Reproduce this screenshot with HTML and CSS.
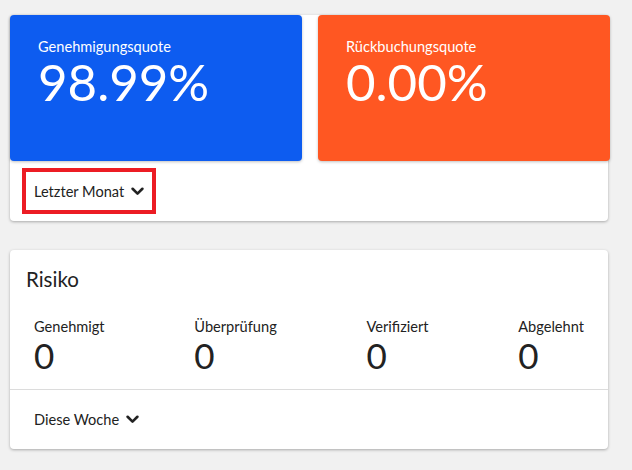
FILE: index.html
```html
<!DOCTYPE html>
<html lang="de">
<head>
  <meta charset="UTF-8" />
  <meta name="viewport" content="width=device-width, initial-scale=1.0"/>
  <title>Dashboard</title>
  <link rel="stylesheet" href="styles.css">
</head>
<body>
  <div class="page">
    <section class="card">
      <div class="tiles">
        <div class="tile tile-blue">
          <div class="tile-label">Genehmigungsquote</div>
          <div class="tile-value">98.99%</div>
        </div>
        <div class="tile tile-orange">
          <div class="tile-label">Rückbuchungsquote</div>
          <div class="tile-value">0.00%</div>
        </div>
      </div>
      <div class="card-footer">
        <button class="period period-focus">Letzter Monat
          <svg class="chevron" viewBox="0 0 12 8" width="13" height="9"><path d="M1.5 1.5 6 6l4.5-4.5" fill="none" stroke="currentColor" stroke-width="2.4" stroke-linecap="round" stroke-linejoin="round"/></svg>
        </button>
      </div>
    </section>

    <section class="card">
      <h2 class="card-title">Risiko</h2>
      <div class="stats">
        <div class="stat"><div class="stat-label">Genehmigt</div><div class="stat-value">0</div></div>
        <div class="stat"><div class="stat-label">Überprüfung</div><div class="stat-value">0</div></div>
        <div class="stat"><div class="stat-label">Verifiziert</div><div class="stat-value">0</div></div>
        <div class="stat"><div class="stat-label">Abgelehnt</div><div class="stat-value">0</div></div>
      </div>
      <div class="card-footer bordered">
        <button class="period">Diese Woche
          <svg class="chevron" viewBox="0 0 12 8" width="13" height="9"><path d="M1.5 1.5 6 6l4.5-4.5" fill="none" stroke="currentColor" stroke-width="2.4" stroke-linecap="round" stroke-linejoin="round"/></svg>
        </button>
      </div>
    </section>
  </div>
</body>
</html>
```

FILE: styles.css
```css
body { margin: 0; background: #f1f1f1; font-family: Lato, "Open Sans", sans-serif; color: #222; }
.page { padding: 15px 24px 20px 10px; display: flex; flex-direction: column; gap: 29px; }
.card { background: #fff; border-radius: 4px; box-shadow: 0 1px 3px rgba(0,0,0,0.3); }

.tiles { display: grid; grid-template-columns: 1fr 1fr; gap: 16px; margin-right: -2px; }
.tile { height: 146px; box-sizing: border-box; padding: 22px 28px; border-radius: 4px; color: #fff; box-shadow: 0 1px 3px rgba(0,0,0,0.25); }
.tile-blue { background: #0d5cf0; }
.tile-orange { background: #ff5722; }
.tile-label { font-size: 14.6px; line-height: 20px; }
.tile-value { font-size: 51px; line-height: 50px; }

.card-footer { height: 60px; display: flex; align-items: center; padding-left: 12px; }
.card-footer.bordered { border-top: 1px solid #dcdcdc; padding-bottom: 1px; box-sizing: border-box; }
.period { display: flex; align-items: center; gap: 7px; height: 46px; padding: 0 12px; border: none; background: none; font: inherit; font-size: 14.6px; color: #222; cursor: pointer; }
.period-focus { outline: 4px solid #ec1c24; outline-offset: -4px; }
.chevron { margin-top: 1px; }

.card-title { margin: 0; padding: 17px 16px 0; font-size: 20.5px; font-weight: normal; line-height: 24px; }
.stats { display: flex; justify-content: space-between; padding: 27px 24px 15px; }
.stat-label { font-size: 14.6px; line-height: 18px; }
.stat-value { font-size: 35px; line-height: 38px; }
```
